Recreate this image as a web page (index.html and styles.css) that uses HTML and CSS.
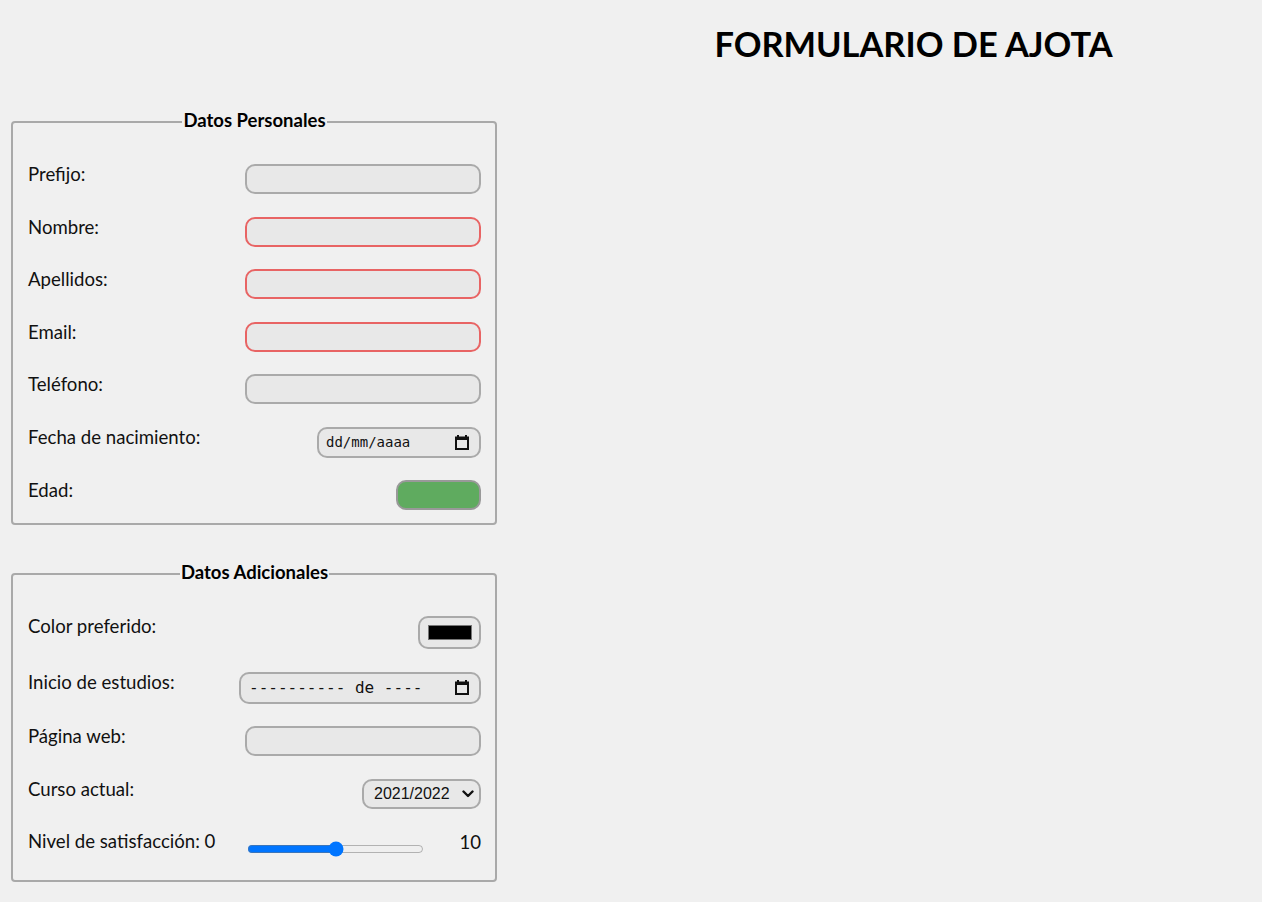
FILE: index.html
```html
<!DOCTYPE html>
<html lang="es">
<head>
<meta charset="utf-8">
<title>Formulario de Ajota</title>
<link rel="stylesheet" href="styles.css">
</head>
<body>
<div class="page">
  <form class="form">
    <fieldset class="group">
      <legend>Datos Personales</legend>
      <div class="row"><label for="prefijo">Prefijo:</label><input class="field" id="prefijo" type="text"></div>
      <div class="row"><label for="nombre">Nombre:</label><input class="field invalid" id="nombre" type="text"></div>
      <div class="row"><label for="apellidos">Apellidos:</label><input class="field invalid" id="apellidos" type="text"></div>
      <div class="row"><label for="email">Email:</label><input class="field invalid" id="email" type="text"></div>
      <div class="row"><label for="telefono">Teléfono:</label><input class="field" id="telefono" type="text"></div>
      <div class="row"><label>Fecha de nacimiento:</label>
        <div class="fake-date date-birth"><span>dd/mm/aaaa</span>
          <svg class="cal" width="14" height="15" viewBox="0 0 14 15"><path d="M3 0v2M11 0v2" stroke="#111" stroke-width="2"/><rect x="1" y="2.5" width="12" height="11.5" fill="none" stroke="#111" stroke-width="2"/><rect x="1" y="2" width="12" height="3" fill="#111"/></svg>
        </div>
      </div>
      <div class="row"><label for="edad">Edad:</label><input class="field age" id="edad" type="text"></div>
    </fieldset>

    <fieldset class="group">
      <legend>Datos Adicionales</legend>
      <div class="row"><label>Color preferido:</label><div class="color-box"><span class="swatch"></span></div></div>
      <div class="row"><label>Inicio de estudios:</label>
        <div class="fake-date date-month"><span class="month-text">---------- de ----</span>
          <svg class="cal" width="14" height="15" viewBox="0 0 14 15"><path d="M3 0v2M11 0v2" stroke="#111" stroke-width="2"/><rect x="1" y="2.5" width="12" height="11.5" fill="none" stroke="#111" stroke-width="2"/><rect x="1" y="2" width="12" height="3" fill="#111"/></svg>
        </div>
      </div>
      <div class="row"><label for="web">Página web:</label><input class="field" id="web" type="text"></div>
      <div class="row"><label for="curso">Curso actual:</label>
        <span class="select-wrap">
          <select class="select" id="curso"><option>2021/2022</option></select>
          <svg class="chev" width="12" height="8" viewBox="0 0 12 8"><path d="M1.5 1.5 6 6l4.5-4.5" fill="none" stroke="#111" stroke-width="2.4" stroke-linecap="round" stroke-linejoin="round"/></svg>
        </span>
      </div>
      <div class="row row-range"><label for="nivel">Nivel de satisfacción: 0</label>
        <input class="range" id="nivel" type="range" min="0" max="10" value="5">
        <span class="max">10</span>
      </div>
    </fieldset>
  </form>
  <header class="head">
    <h1>FORMULARIO DE AJOTA</h1>
  </header>
</div>
</body>
</html>
```

FILE: styles.css
```css
html, body {
  margin: 0;
  padding: 0;
  background: #f0f0f0;
}
body {
  font-family: Lato, "Noto Sans", sans-serif;
  color: #111;
}
.page {
  display: grid;
  grid-template-columns: 565px 1fr;
}
.form {
  padding: 109px 0 0 11px;
  display: flex;
  flex-direction: column;
  gap: 36px;
}
.head {
  text-align: center;
}
.head h1 {
  margin: 23px 0 0;
  font-size: 34.4px;
  font-weight: 700;
  color: #000;
}
.group {
  width: 486px;
  box-sizing: border-box;
  margin: 0;
  border: 2px solid #a9a9a9;
  border-radius: 4px;
  padding: 29px 14px 13px 15px;
  display: flex;
  flex-direction: column;
  gap: 22.5px;
}
.group legend {
  margin: 0 auto;
  padding: 0 1px 4px;
  font-size: 18.5px;
  line-height: 22px;
  font-weight: 700;
  color: #000;
}
.row {
  display: flex;
  justify-content: space-between;
  align-items: flex-start;
  font-size: 18.6px;
}
.row label {
  line-height: 22px;
  margin-top: -1px;
}
.field {
  box-sizing: border-box;
  width: 236px;
  height: 30px;
  border: 2px solid #aaa;
  border-radius: 10px;
  background: #e8e8e8;
  margin: 0;
  padding: 0 8px;
  font: inherit;
  outline: none;
}
.field.invalid {
  border-color: #e86464;
}
.field.age {
  width: 85px;
  background: #5fab5f;
  border-color: #999;
}
.fake-date {
  box-sizing: border-box;
  height: 31px;
  border: 2px solid #aaa;
  border-radius: 10px;
  background: #e8e8e8;
  display: flex;
  align-items: center;
  justify-content: space-between;
  font-family: "DejaVu Sans Mono", monospace;
  font-size: 14px;
  color: #111;
}
.date-birth {
  width: 164px;
  padding: 0 10px 0 7px;
}
.date-month {
  width: 242px;
  height: 32px;
  padding: 0 10px 0 8px;
}
.month-text {
  font-size: 16px;
}
.cal {
  display: block;
}
.color-box {
  box-sizing: border-box;
  width: 63px;
  height: 33px;
  border: 2px solid #aaa;
  border-radius: 10px;
  background: #e8e8e8;
  display: flex;
  align-items: center;
  justify-content: center;
}
.swatch {
  width: 42px;
  height: 13px;
  background: #000;
  border: 1px solid #777;
}
.select-wrap {
  position: relative;
  display: block;
}
.select {
  display: block;
  appearance: none;
  -webkit-appearance: none;
  box-sizing: border-box;
  width: 119px;
  height: 30px;
  border: 2px solid #aaa;
  border-radius: 10px;
  background: #e8e8e8;
  font-family: "Liberation Sans", Arial, sans-serif;
  font-size: 16px;
  color: #111;
  padding: 0 20px 0 10px;
  margin: 0;
}
.chev {
  position: absolute;
  right: 7px;
  top: 11px;
  pointer-events: none;
}
.range {
  width: 177px;
  margin: 10px 35px 10px auto;
  accent-color: #0075ff;
}
.max {
  line-height: 22px;
}
```
